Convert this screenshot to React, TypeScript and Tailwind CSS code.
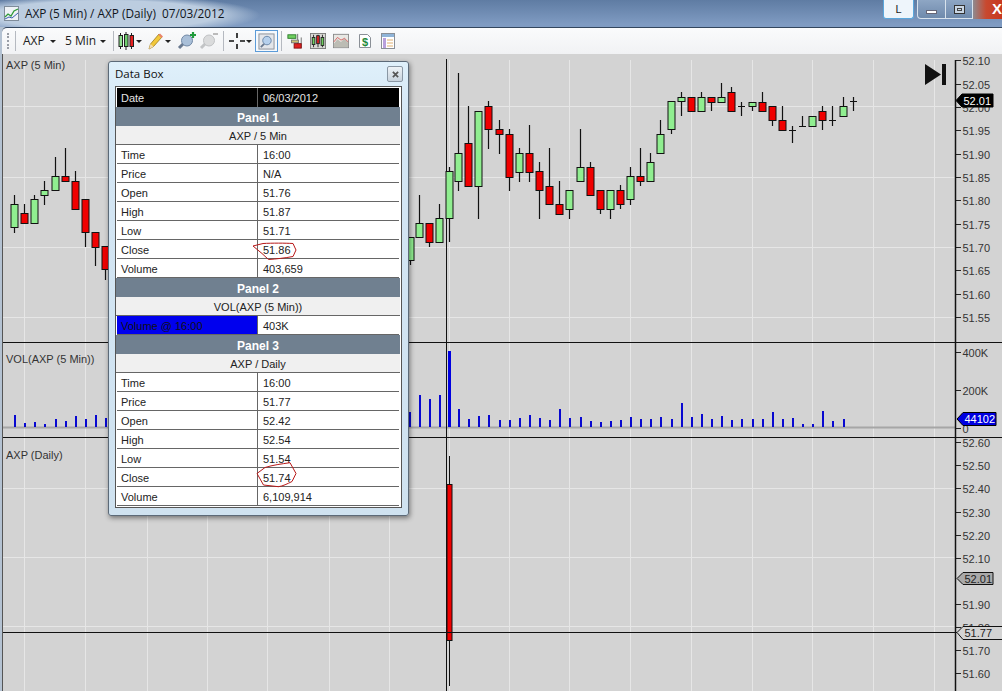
import React from "react";

// x, body top, body bottom, wick top, wick bottom, colour
type Candle = [number, number, number, number, number, "g" | "r"];

const candles: Candle[] = [
  [14, 204, 227, 195, 233, "g"], [24, 213, 223, 204, 223, "r"], [34, 199, 223, 195, 223, "g"],
  [44, 190, 195, 181, 205, "g"], [55, 176, 190, 157, 190, "g"], [65, 176, 181, 148, 181, "r"],
  [75, 181, 209, 171, 209, "r"], [85, 199, 232, 199, 247, "r"], [95, 232, 247, 232, 266, "r"],
  [105, 246, 269, 246, 280, "r"], [410, 237, 260, 237, 265, "g"], [419, 223, 237, 195, 237, "g"],
  [429, 223, 242, 223, 247, "r"], [439, 218, 242, 204, 242, "g"], [449, 171, 218, 167, 242, "g"],
  [458, 153, 181, 73, 191, "g"], [468, 143, 186, 106, 186, "r"], [478, 111, 186, 111, 219, "g"],
  [488, 106, 129, 101, 149, "r"], [499, 129, 134, 120, 154, "r"], [509, 134, 177, 129, 191, "r"],
  [519, 153, 172, 148, 182, "g"], [529, 153, 172, 125, 182, "r"], [539, 171, 190, 162, 219, "r"],
  [549, 186, 204, 148, 204, "r"], [559, 204, 214, 181, 214, "r"], [569, 190, 209, 190, 219, "g"],
  [580, 167, 181, 129, 181, "g"], [590, 167, 195, 162, 195, "r"], [600, 190, 209, 190, 214, "r"],
  [610, 190, 209, 190, 219, "g"], [620, 190, 204, 185, 209, "r"], [630, 176, 199, 167, 205, "g"],
  [640, 176, 181, 148, 186, "r"], [650, 162, 181, 153, 181, "g"], [660, 134, 153, 120, 153, "g"],
  [671, 101, 129, 101, 134, "g"], [681, 97, 101, 92, 116, "g"], [691, 97, 111, 97, 111, "r"],
  [701, 97, 111, 92, 111, "g"], [711, 97, 102, 97, 111, "r"], [721, 97, 102, 83, 102, "g"],
  [731, 92, 111, 87, 111, "r"], [741, 106, 106, 102, 116, "g"], [752, 102, 106, 102, 111, "g"],
  [762, 102, 111, 92, 111, "r"], [772, 106, 120, 106, 126, "r"], [782, 120, 130, 106, 130, "r"],
  [792, 130, 130, 126, 143, "g"], [802, 126, 126, 116, 126, "g"], [812, 116, 126, 116, 126, "g"],
  [822, 111, 120, 106, 130, "r"], [832, 120, 120, 106, 126, "g"], [843, 106, 116, 97, 116, "g"],
  [853, 101, 101, 97, 111, "g"],
];

// x, top of bar; the baseline is at y 427
const volume: [number, number][] = [
  [14, 415], [24, 423], [34, 422], [44, 424], [55, 419], [65, 421], [75, 416], [85, 419], [95, 415],
  [105, 418], [409, 412], [419, 395], [429, 399], [439, 395], [458, 409], [468, 419], [478, 416],
  [488, 415], [499, 420], [509, 420], [519, 418], [529, 415], [539, 418], [549, 420], [559, 409],
  [569, 418], [580, 417], [590, 421], [600, 422], [610, 421], [620, 420], [630, 417], [640, 419],
  [650, 419], [660, 417], [671, 419], [681, 403], [691, 417], [701, 414], [711, 419], [721, 416],
  [731, 420], [741, 419], [752, 419], [762, 419], [772, 412], [782, 419], [792, 418], [802, 424],
  [812, 424], [822, 411], [832, 421], [843, 419],
];

const gridX = [24, 85, 147, 207, 267, 329, 389, 449, 509, 569, 630, 691, 752, 812, 873, 934];

const topAxis: [string, number][] = [
  ["52.10", 60], ["52.05", 84], ["52.00", 107], ["51.95", 130], ["51.90", 154], ["51.85", 177],
  ["51.80", 200], ["51.75", 224], ["51.70", 247], ["51.65", 270], ["51.60", 294], ["51.55", 317],
];
const volAxis: [string, number][] = [["400K", 352], ["200K", 390], ["0", 428]];
const dailyAxis: [string, number][] = [
  ["52.60", 442], ["52.50", 465], ["52.40", 488], ["52.30", 512], ["52.20", 535], ["52.10", 558],
  ["51.90", 604], ["51.80", 627], ["51.70", 650], ["51.60", 673],
];

const font = "Liberation Sans, Arial, sans-serif";

function Axis({ ticks }: { ticks: [string, number][] }) {
  return (
    <g>
      {ticks.map(([label, y]) => (
        <g key={label}>
          <line x1={956} x2={961} y1={y + 0.5} y2={y + 0.5} stroke="#222" />
          <text x={962.5} y={y + 4.5} fontSize={11} fill="#333" fontFamily={font}>
            {label}
          </text>
        </g>
      ))}
    </g>
  );
}

function Grid({ rows, y1, y2 }: { rows: number[]; y1: number; y2: number }) {
  return (
    <g stroke="#e6e6e6">
      {gridX.map((x) => (
        <line key={x} x1={x + 0.5} x2={x + 0.5} y1={y1} y2={y2} />
      ))}
      {rows.map((y) => (
        <line key={y} x1={3} x2={955} y1={y + 0.5} y2={y + 0.5} />
      ))}
    </g>
  );
}

function Panel({ top, height, children }: { top: number; height: number; children: React.ReactNode }) {
  return (
    <svg viewBox={`3 ${top} 999 ${height}`} width={999} height={height} className="block shrink-0">
      {children}
      <line x1={955.5} x2={955.5} y1={top === 54 ? 60 : top} y2={top + height} stroke="#111" strokeWidth={1.5} />
    </svg>
  );
}

function PriceTag({ x, y, w, h, fill, stroke, color, label }: { x: number; y: number; w: number; h: number; fill: string; stroke: string; color: string; label: string }) {
  const mid = y + h / 2;
  return (
    <g>
      <path d={`M${x} ${mid}L${x + 6} ${y}H${x + w}V${y + h}H${x + 6}Z`} fill={fill} stroke={stroke} />
      <text x={x + 7.5} y={mid + 4} fontSize={11} fill={color} fontFamily={font}>
        {label}
      </text>
    </g>
  );
}

function Arrow({ className }: { className: string }) {
  return <span className={`h-0 w-0 shrink-0 border-x-[3px] border-t-[3px] border-x-transparent border-t-[#222] ${className}`} />;
}

function Candles() {
  return (
    <svg viewBox="0 0 16 18" className="ml-[4px] h-[18px] w-[16px] shrink-0">
      <path d="M2.5 1v16M8 0v18M13.5 1v16" stroke="#222" />
      <rect x="1" y="3.5" width="3.5" height="11" fill="#8fe28f" stroke="#222" />
      <rect x="6.5" y="2.5" width="3.5" height="12" fill="#6fcf6f" stroke="#222" />
      <rect x="12" y="3.5" width="3.5" height="11" fill="#e82020" stroke="#222" />
    </svg>
  );
}

function Pencil() {
  return (
    <svg viewBox="0 0 16 18" className="ml-[6px] h-[18px] w-[16px] shrink-0">
      <path d="M1 17l1.5-5L11 2l3 3-8.5 9.5z" fill="#f2c83a" stroke="#9a7a1e" strokeWidth=".8" />
      <path d="M1 17l1.5-5 3 2.5z" fill="#f3dcb0" />
      <path d="M10.5 3l3 3 1.5-1.5-3-3z" fill="#e8836a" />
    </svg>
  );
}

function Lens({ plus, dim, className }: { plus?: boolean; dim?: boolean; className: string }) {
  return (
    <svg viewBox="0 0 20 20" className={`h-[20px] w-[20px] shrink-0 ${className}`}>
      <path d="M2 17l5-5" stroke={dim ? "#c2c4c6" : "#6a7a90"} strokeWidth="3" />
      <circle cx="10" cy="9.5" r="5.5" fill={dim ? "#dadbdc" : "#a9bfd8"} stroke={dim ? "#c0c2c4" : "#7189a6"} />
      {plus && <path d="M13 4h6M16 1v6" stroke="#1f9a3a" strokeWidth="2.2" />}
      {dim && <path d="M14 3h5" stroke="#bbb" strokeWidth="2" />}
    </svg>
  );
}

function Toolbar() {
  return (
    <div className="ml-[2px] flex h-[27px] w-[1000px] items-center rounded-tl-[5px] border-t border-[#33465e] bg-[linear-gradient(#fafbfc,#f1f2f4)] text-[12px] text-[#222] [font-family:'Open_Sans',sans-serif]">
      <span className="ml-[5px] h-[16px] w-[3px] border-l-2 border-dotted border-[#9a9ea6]" />
      <span className="ml-[5px] h-[20px] w-px bg-[#b5b9c0]" />
      <span className="ml-[7px] w-[21px] shrink-0">AXP</span>
      <Arrow className="ml-[6px]" />
      <span className="ml-[9px] w-[31px] shrink-0 whitespace-nowrap">5 Min</span>
      <Arrow className="ml-[4px]" />
      <span className="ml-[7px] h-[20px] w-px bg-[#b5b9c0]" />
      <Candles />
      <Arrow className="ml-[2px]" />
      <Pencil />
      <Arrow className="ml-[1px]" />
      <Lens plus className="ml-[6px]" />
      <Lens dim className="ml-[2px]" />
      <span className="ml-[4px] h-[20px] w-px bg-[#b5b9c0]" />
      <svg viewBox="0 0 16 16" className="ml-[5px] h-[16px] w-[16px] shrink-0">
        <path d="M0 8h5M11 8h5M8 0v5M8 11v5" stroke="#111" strokeWidth="1.6" />
      </svg>
      <Arrow className="ml-[1px]" />
      <span className="ml-[3px] flex h-[22px] w-[23px] shrink-0 items-center justify-center border border-[#5b9bd8] bg-[#f5f9fd]">
        <svg viewBox="0 0 18 18" className="h-[17px] w-[17px]">
          <rect x="1" y="1" width="16" height="16" fill="#e3e6ea" stroke="#8a8f96" />
          <circle cx="9.5" cy="8" r="4.5" fill="#b6d0ec" stroke="#6a87a8" />
          <path d="M3 15l3.5-3.5" stroke="#6a7a90" strokeWidth="2" />
        </svg>
      </span>
      <span className="ml-[3px] h-[20px] w-px bg-[#b5b9c0]" />
      <svg viewBox="0 0 18 18" className="ml-[5px] h-[16px] w-[16px] shrink-0">
        <path d="M12 1v16M16 5v12" stroke="#666" />
        <rect x="1" y="2" width="9" height="4" fill="#6fcf5f" stroke="#2a7a2a" />
        <rect x="5" y="8" width="8" height="3" fill="#c8c070" stroke="#777" />
        <rect x="8" y="12" width="8" height="5" fill="#e02020" stroke="#801010" />
      </svg>
      <svg viewBox="0 0 18 18" className="ml-[7px] h-[16px] w-[16px] shrink-0">
        <rect x=".5" y=".5" width="17" height="17" fill="#d8d8d4" stroke="#777" />
        <path d="M4 2v14M9 2v14M14 2v14" stroke="#222" />
        <rect x="2.5" y="5" width="3" height="8" fill="#6fcf5f" stroke="#222" />
        <rect x="7.5" y="3" width="3" height="9" fill="#e02020" stroke="#222" />
        <rect x="12.5" y="5" width="3" height="9" fill="#6fcf5f" stroke="#222" />
      </svg>
      <svg viewBox="0 0 18 18" className="ml-[7px] h-[16px] w-[16px] shrink-0">
        <rect x=".5" y="1.5" width="17" height="15" fill="#e8e8e4" stroke="#888" />
        <path d="M1 12l4-5 4 3 4-4 4 5v5H1z" fill="#bcbcb4" />
        <path d="M1 10l4-5 4 3 4-2 4 4" fill="none" stroke="#d85a5a" />
      </svg>
      <svg viewBox="0 0 14 16" className="ml-[9px] h-[16px] w-[14px] shrink-0">
        <path d="M1.5 1.5h8l3 3v10h-11z" fill="#fff" stroke="#8a8f96" />
        <text x="7" y="12.5" fontSize="11" fontWeight="700" textAnchor="middle" fill="#1f8a3a" fontFamily={font}>
          $
        </text>
      </svg>
      <svg viewBox="0 0 14 16" className="ml-[9px] h-[16px] w-[14px] shrink-0">
        <rect x=".5" y=".5" width="13" height="15" fill="#fff" stroke="#8a8f96" />
        <rect x="1" y="1" width="12" height="3" fill="#8fb4d8" />
        <rect x="2" y="5" width="3" height="10" fill="#b9a0dc" />
        <path d="M6 7h6M6 10h6M6 13h6" stroke="#e0b070" />
      </svg>
    </div>
  );
}

function TitleBar() {
  return (
    <div className="flex h-[27px] w-[1002px] items-center bg-[radial-gradient(ellipse_155px_20px_at_105px_15px,#bccde0_72%,transparent_100%),linear-gradient(#5f7ca3,#7f9bc2_90%)] pl-[4px]">
      <svg viewBox="0 0 15 15" className="h-[15px] w-[15px] shrink-0">
        <rect x=".5" y=".5" width="14" height="14" fill="#eef2f6" stroke="#7f8c9a" />
        <path d="M1 11l3-3 3 2 3-5 4-2" fill="none" stroke="#2f9a3a" strokeWidth="1.3" />
        <path d="M1 13l4-2 3 1 6-5" fill="none" stroke="#3a5fb0" />
      </svg>
      <span className="ml-[6px] whitespace-pre text-[11.8px] text-[#10151c] [font-family:'Open_Sans',sans-serif]">
        AXP (5 Min) / AXP (Daily)  07/03/2012
      </span>
      <div className="ml-auto flex h-[19px] self-start">
        <div className="flex w-[31px] items-center justify-center rounded-b-[3px] border border-t-0 border-[#5aa7dc] bg-[#eef5fb] text-[11px] text-[#222] [font-family:'Liberation_Sans',sans-serif]">
          L
        </div>
        <div className="ml-[3px] flex w-[29px] items-center justify-center rounded-bl-[4px] border border-t-0 border-[#d8e2ec] bg-[linear-gradient(#8ea6c4,#6f8aac)]">
          <span className="mt-[6px] h-[4px] w-[11px] border border-[#667] bg-white" />
        </div>
        <div className="flex w-[27px] items-center justify-center border-b border-r border-[#d8e2ec] bg-[linear-gradient(#8ea6c4,#6f8aac)]">
          <span className="h-[9px] w-[11px] border border-[#333] bg-[#c9d6e4] p-[2px]">
            <span className="block h-full w-full border border-[#444]" />
          </span>
        </div>
        <div className="flex w-[29px] items-center justify-end overflow-hidden bg-[linear-gradient(90deg,#8e8a90,#c8492f_45%,#c8381f)] text-[15px] font-bold text-white [font-family:'Liberation_Sans',sans-serif]">
          X
        </div>
      </div>
    </div>
  );
}

type Row = { kind: "head" | "sub" | "date" | "row" | "blue"; a: string; b?: string };

const rows: Row[] = [
  { kind: "date", a: "Date", b: "06/03/2012" },
  { kind: "head", a: "Panel 1" },
  { kind: "sub", a: "AXP / 5 Min" },
  { kind: "row", a: "Time", b: "16:00" },
  { kind: "row", a: "Price", b: "N/A" },
  { kind: "row", a: "Open", b: "51.76" },
  { kind: "row", a: "High", b: "51.87" },
  { kind: "row", a: "Low", b: "51.71" },
  { kind: "row", a: "Close", b: "51.86" },
  { kind: "row", a: "Volume", b: "403,659" },
  { kind: "head", a: "Panel 2" },
  { kind: "sub", a: "VOL(AXP (5 Min))" },
  { kind: "blue", a: "Volume @ 16:00", b: "403K" },
  { kind: "head", a: "Panel 3" },
  { kind: "sub", a: "AXP / Daily" },
  { kind: "row", a: "Time", b: "16:00" },
  { kind: "row", a: "Price", b: "51.77" },
  { kind: "row", a: "Open", b: "52.42" },
  { kind: "row", a: "High", b: "52.54" },
  { kind: "row", a: "Low", b: "51.54" },
  { kind: "row", a: "Close", b: "51.74" },
  { kind: "row", a: "Volume", b: "6,109,914" },
];

function BoxRow({ row }: { row: Row }) {
  if (row.kind === "head") {
    return (
      <div className="flex h-[19px] items-center justify-center bg-[#708090] pt-[2px] text-[12px] font-bold text-white">
        {row.a}
      </div>
    );
  }
  if (row.kind === "sub") {
    return (
      <div className="flex h-[19px] items-center justify-center border-b border-[#666] bg-[#f0f0f0] pt-[2px] text-[#222]">
        {row.a}
      </div>
    );
  }
  if (row.kind === "date") {
    return (
      <div className="mx-px flex h-[19px] bg-black text-[#e4e4e4]">
        <div className="flex w-[141px] items-center border-r border-[#666] pl-[4px] pt-[2px]">{row.a}</div>
        <div className="flex items-center pl-[5px] pt-[2px]">{row.b}</div>
      </div>
    );
  }
  return (
    <div className="mx-px flex h-[19px] border-b border-[#666] bg-white text-[#222]">
      <div className={row.kind === "blue" ? "flex w-[141px] items-center border-r border-[#666] bg-[#0000ee] pl-[4px] pt-[2px] text-[#111]" : "flex w-[141px] items-center border-r border-[#666] pl-[4px] pt-[2px]"}>
        {row.a}
      </div>
      <div className="flex items-center pl-[5px] pt-[2px]">{row.b}</div>
    </div>
  );
}

function DataBox() {
  return (
    <div className="absolute left-[108px] top-[61px] h-[455px] w-[301px] rounded-[3px] border border-[#5c6a78] bg-[linear-gradient(#dff0fb,#d4e6f4_60px,#cfe2f0)] shadow-[1px_2px_5px_rgba(0,0,0,0.45)] [font-family:'Liberation_Sans',sans-serif]">
      <div className="flex h-[24px] items-center justify-between pl-[6px] pr-[5px] text-[11.5px] text-[#111] [font-family:'Open_Sans',sans-serif]">
        <span>Data Box</span>
        <span className="flex h-[16px] w-[16px] items-center justify-center rounded-[2px] border border-[#8a97a4] bg-[linear-gradient(#eef3f7,#c8d3dd)]">
          <svg viewBox="0 0 8 8" className="h-[7px] w-[7px]">
            <path d="M1 1l6 6M7 1L1 7" stroke="#555" strokeWidth="2" />
          </svg>
        </span>
      </div>
      <div className="ml-[6px] w-[287px] border border-[#555] bg-white py-px pr-px text-[11px]">
        {rows.map((r, i) => (
          <BoxRow key={i} row={r} />
        ))}
      </div>
    </div>
  );
}

export default function App() {
  return (
    <div className="relative h-[691px] w-[1008px] overflow-hidden bg-white">
      <div className="h-[691px] w-[1002px] bg-[#b4c2d2]">
        <TitleBar />
        <Toolbar />
        <div className="ml-[2px] flex h-[637px] w-[1000px] flex-col border-l border-[#555] bg-[#d3d3d3]">
          <Panel top={54} height={288}>
            <Grid rows={[106, 177, 247, 317]} y1={60} y2={342} />
            <line x1={446.5} x2={446.5} y1={59} y2={342} stroke="#111" />
            {candles.map(([x, top, bottom, wt, wb, c]) => (
              <g key={x} stroke="#111">
                <line x1={x + 0.5} x2={x + 0.5} y1={wt} y2={wb} strokeWidth={1.2} />
                {top === bottom ? (
                  <line x1={x - 3} x2={x + 4} y1={top + 0.5} y2={top + 0.5} />
                ) : (
                  <rect x={x - 3} y={top + 0.5} width={7} height={bottom - top} fill={c === "g" ? "#90ee90" : "#f00000"} />
                )}
              </g>
            ))}
            <text x={6} y={69} fontSize={11} fill="#333" fontFamily={font}>
              AXP (5 Min)
            </text>
            <path d="M925 64l16 10.5L925 85zM942 64h4v21h-4z" fill="#111" />
            <Axis ticks={topAxis} />
            <PriceTag x={956} y={94} w={37} h={13} fill="#000" stroke="#000" color="#fff" label="52.01" />
          </Panel>
          <Panel top={342} height={95}>
            <Grid rows={[]} y1={342} y2={437} />
            <line x1={3} x2={955} y1={427.5} y2={427.5} stroke="#a6a6a6" strokeWidth={2} />
            <line x1={446.5} x2={446.5} y1={342} y2={437} stroke="#111" />
            <rect x={448} y={351} width={3} height={76} fill="#0000e0" />
            {volume.map(([x, top]) => (
              <rect key={x} x={x} y={top} width={2} height={427 - top} fill="#0808d0" />
            ))}
            <text x={6} y={363} fontSize={11} fill="#333" fontFamily={font}>
              VOL(AXP (5 Min))
            </text>
            <Axis ticks={volAxis} />
            <PriceTag x={957} y={412.5} w={39} h={13} fill="#0000e0" stroke="#000" color="#fff" label="44102" />
            <line x1={3} x2={1002} y1={342.5} y2={342.5} stroke="#111" />
          </Panel>
          <Panel top={437} height={254}>
            <Grid rows={[488, 557, 626]} y1={437} y2={691} />
            <line x1={446.5} x2={446.5} y1={437} y2={691} stroke="#111" />
            <line x1={449.5} x2={449.5} y1={456} y2={686} stroke="#111" />
            <rect x={447} y={484.5} width={5} height={156} fill="#f00000" stroke="#111" />
            <line x1={3} x2={957} y1={632.5} y2={632.5} stroke="#111" />
            <text x={6} y={459} fontSize={11} fill="#333" fontFamily={font}>
              AXP (Daily)
            </text>
            <Axis ticks={dailyAxis} />
            <PriceTag x={957} y={572.5} w={36} h={12} fill="#a9a9a9" stroke="#111" color="#222" label="52.01" />
            <path d="M1002 626.5H963L957 632.5L963 639.5H1002" fill="#d3d3d3" stroke="#111" />
            <text x={964.5} y={637} fontSize={11} fill="#222" fontFamily={font}>
              51.77
            </text>
            <line x1={3} x2={1002} y1={437.5} y2={437.5} stroke="#111" />
          </Panel>
        </div>
      </div>
      <DataBox />
      <svg className="pointer-events-none absolute left-0 top-0" width={1008} height={691} fill="none" stroke="#b81818" strokeWidth={1}>
        <path d="M253 246L263 243.5C272 243 285 243 293 243.5L296 250L293 256.5C285 258 276 259 268.5 259.5L262 253.5L253 246" />
        <path d="M257 473.5L265 467.5C273 465 281 464 290 462.7L296 473.5L292 481.5C287 484 283 486 278.5 486.7L263.5 485L257 473.5" />
      </svg>
    </div>
  );
}
